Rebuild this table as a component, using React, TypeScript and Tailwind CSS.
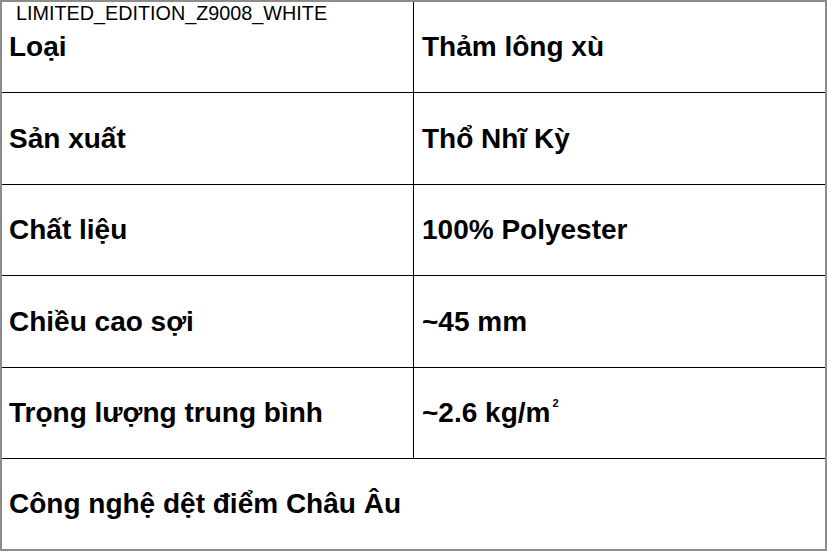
import React from "react";

const rows: { label: string; value?: React.ReactNode; h: string }[] = [
  { label: "Loại", value: "Thảm lông xù", h: "h-[91px]" },
  { label: "Sản xuất", value: "Thổ Nhĩ Kỳ", h: "h-[92px]" },
  { label: "Chất liệu", value: "100% Polyester", h: "h-[91px]" },
  { label: "Chiều cao sợi", value: "~45 mm", h: "h-[92px]" },
  {
    label: "Trọng lượng trung bình",
    value: (
      <>
        ~2.6 kg/m<span className="text-[11px] leading-none relative top-[-10px] ml-[2px]">2</span>
      </>
    ),
    h: "h-[91px]",
  },
];

export default function App() {
  return (
    <div
      className="w-[827px] h-[551px] bg-white text-black"
      style={{ fontFamily: '"Liberation Sans", Arial, sans-serif' }}
    >
      <div className="relative w-[827px] h-[551px] border-2 border-[#8c8c8c] flex flex-col">
        <div className="absolute top-0 left-[14px] text-[19.8px] leading-[23px] font-normal">
          LIMITED_EDITION_Z9008_WHITE
        </div>
        {rows.map((r, i) => (
          <div key={i} className={`flex ${r.h} border-b border-black`}>
            <div className="w-[412px] shrink-0 border-r border-black flex items-center pl-[7px] text-[28px] font-bold">
              {r.label}
            </div>
            <div className="flex-1 flex items-center pl-[8px] text-[28px] font-bold">
              {r.value}
            </div>
          </div>
        ))}
        <div className="flex-1 flex items-center pl-[7px] text-[28px] font-bold">
          Công nghệ dệt điểm Châu Âu
        </div>
      </div>
    </div>
  );
}
